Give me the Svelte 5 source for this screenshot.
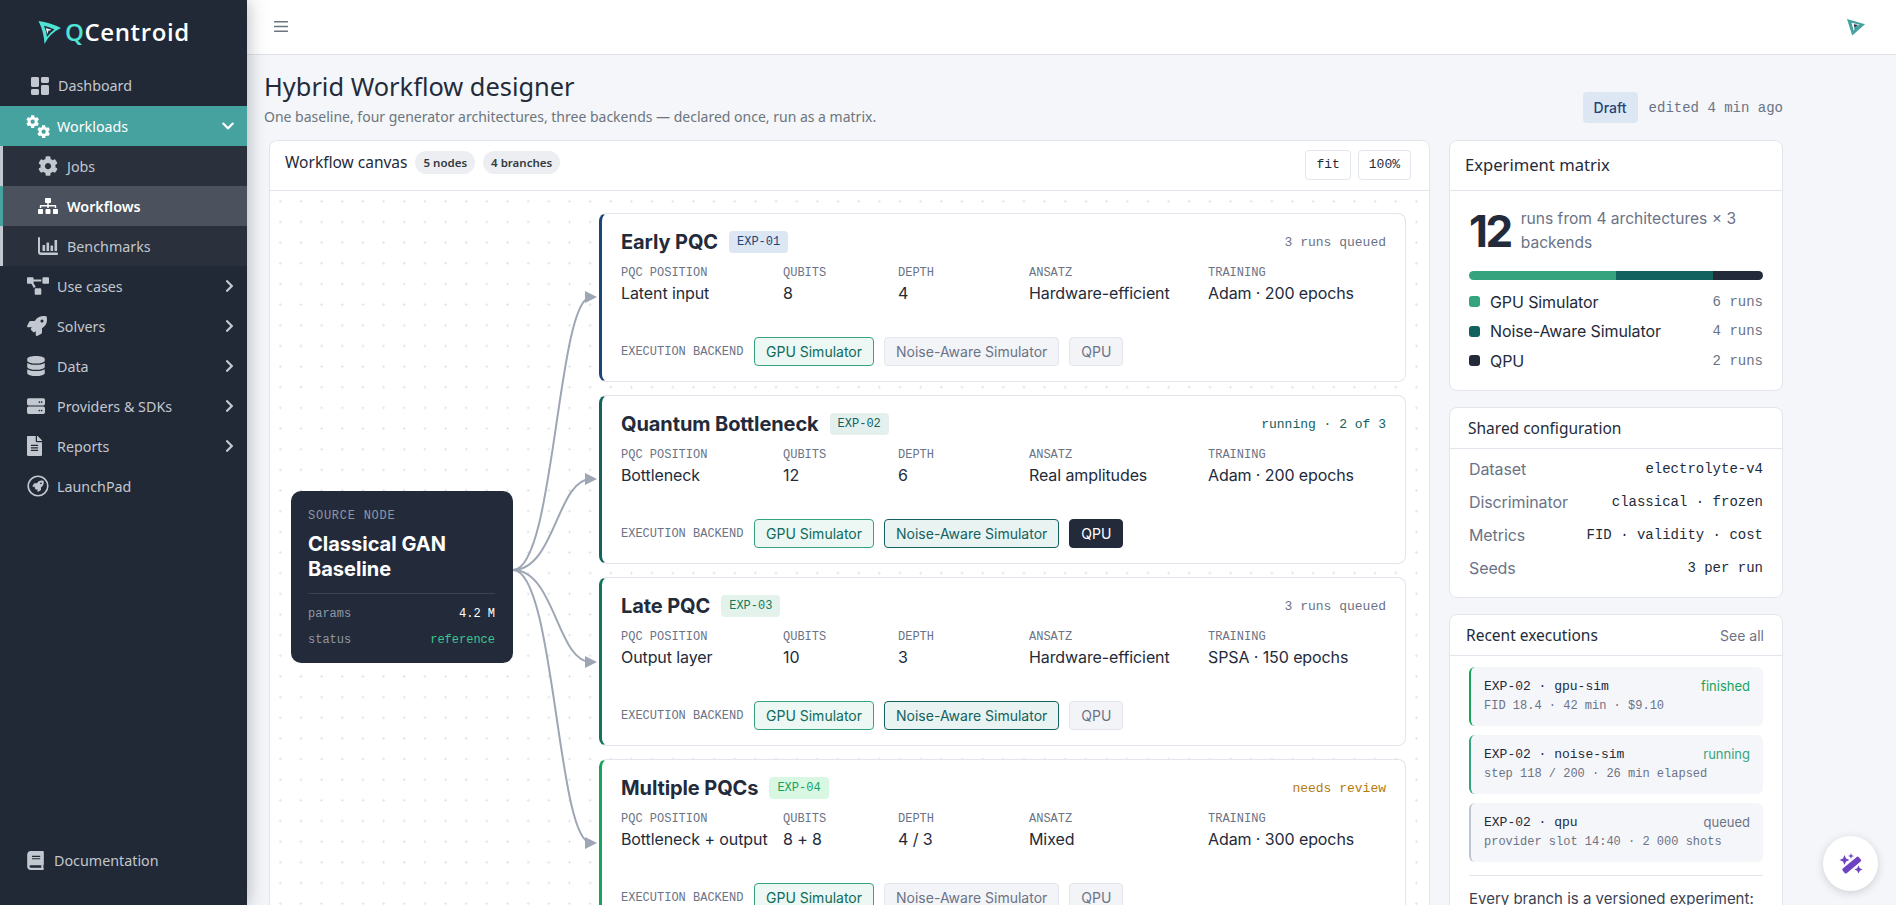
<script lang="ts">
  const COG = 'M487.4 315.7l-42.6-24.6c4.3-23.2 4.3-47 0-70.2l42.6-24.6c4.9-2.8 7.1-8.6 5.5-14-11.1-35.6-30-67.8-54.7-94.6-3.8-4.1-10-5.1-14.8-2.3L380.8 110c-17.9-15.4-38.5-27.3-60.8-35.1V25.8c0-5.6-3.9-10.5-9.4-11.7-36.7-8.2-74.3-7.8-109.2 0-5.5 1.2-9.4 6.1-9.4 11.7V75c-22.2 7.9-42.8 19.8-60.8 35.1L88.7 85.5c-4.9-2.8-11-1.9-14.8 2.3-24.7 26.7-43.6 58.9-54.7 94.6-1.7 5.4.6 11.2 5.5 14L67.3 221c-4.3 23.2-4.3 47 0 70.2l-42.6 24.6c-4.9 2.8-7.1 8.6-5.5 14 11.1 35.6 30 67.8 54.7 94.6 3.8 4.1 10 5.1 14.8 2.3l42.6-24.6c17.9 15.4 38.5 27.3 60.8 35.1v49.2c0 5.6 3.9 10.5 9.4 11.7 36.7 8.2 74.3 7.8 109.2 0 5.5-1.2 9.4-6.1 9.4-11.7v-49.2c22.2-7.9 42.8-19.8 60.8-35.1l42.6 24.6c4.9 2.8 11 1.9 14.8-2.3 24.7-26.7 43.6-58.9 54.7-94.6 1.5-5.5-.7-11.3-5.6-14.1zM256 336c-44.1 0-80-35.9-80-80s35.9-80 80-80 80 35.9 80 80-35.9 80-80 80z';
  const ROCKET = 'M505.12 19.09c-1.19-5.53-6.66-11-12.21-12.19C460.72 0 435.51 0 410.41 0 307.18 0 245.27 55.2 199.05 128H94.84c-16.35.02-35.56 11.88-42.89 26.48L2.52 253.3A28.4 28.4 0 0 0 0 264a24 24 0 0 0 24 24h103.81l-22.47 22.47c-11.37 11.36-13 32.26 0 45.25l50.91 50.91c11.16 11.19 32.16 13.16 45.28 0l22.47-22.47V488a24 24 0 0 0 24 24 28.56 28.56 0 0 0 10.71-2.52l98.73-49.39c14.63-7.3 26.51-26.5 26.51-42.86V312.8c72.6-46.31 128.03-108.41 128.03-211.09.01-25.2.01-50.41-6.95-82.62zM384.04 168a40 40 0 1 1 40.01-40 40.02 40.02 0 0 1-40.01 40z';

  const navAfter = [
    { label: 'Use cases', box: '0 0 640 512', w: 22, d: 'M384 320H256c-17.67 0-32 14.33-32 32v128c0 17.67 14.33 32 32 32h128c17.67 0 32-14.33 32-32V352c0-17.67-14.33-32-32-32zM192 32c0-17.67-14.33-32-32-32H32C14.33 0 0 14.33 0 32v128c0 17.67 14.33 32 32 32h95.72l73.16 128.04C211.98 300.98 232.4 288 256 288h.28L192 175.51V128h224V64H192V32zM608 0H480c-17.67 0-32 14.33-32 32v128c0 17.67 14.33 32 32 32h128c17.67 0 32-14.33 32-32V32c0-17.67-14.33-32-32-32z' },
    { label: 'Solvers', box: '0 0 512 512', w: 20, d: ROCKET },
    { label: 'Data', box: '0 0 448 512', w: 18, d: 'M448 73.143v45.714C448 159.143 347.667 192 224 192S0 159.143 0 118.857V73.143C0 32.857 100.333 0 224 0s224 32.857 224 73.143zM448 176v102.857C448 319.143 347.667 352 224 352S0 319.143 0 278.857V176c48.125 33.143 136.208 48.572 224 48.572S399.874 209.143 448 176zm0 160v102.857C448 479.143 347.667 512 224 512S0 479.143 0 438.857V336c48.125 33.143 136.208 48.572 224 48.572S399.874 369.143 448 336z' },
    { label: 'Providers & SDKs', box: '0 0 512 512', w: 18, d: 'M48 32h416a48 48 0 0 1 48 48v112a48 48 0 0 1-48 48H48a48 48 0 0 1-48-48V80a48 48 0 0 1 48-48zm304 88a24 24 0 1 0 0 48 24 24 0 0 0 0-48zm64 0a24 24 0 1 0 0 48 24 24 0 0 0 0-48zM48 272h416a48 48 0 0 1 48 48v112a48 48 0 0 1-48 48H48a48 48 0 0 1-48-48V320a48 48 0 0 1 48-48zm304 88a24 24 0 1 0 0 48 24 24 0 0 0 0-48zm64 0a24 24 0 1 0 0 48 24 24 0 0 0 0-48z' },
    { label: 'Reports', box: '0 0 384 512', w: 15, d: 'M224 136V0H24C10.7 0 0 10.7 0 24v464c0 13.3 10.7 24 24 24h336c13.3 0 24-10.7 24-24V160H248c-13.2 0-24-10.8-24-24zm64 236c0 6.6-5.4 12-12 12H108c-6.6 0-12-5.4-12-12v-8c0-6.6 5.4-12 12-12h168c6.6 0 12 5.4 12 12v8zm0-64c0 6.6-5.4 12-12 12H108c-6.6 0-12-5.4-12-12v-8c0-6.6 5.4-12 12-12h168c6.6 0 12 5.4 12 12v8zm0-72v8c0 6.6-5.4 12-12 12H108c-6.6 0-12-5.4-12-12v-8c0-6.6 5.4-12 12-12h168c6.6 0 12 5.4 12 12zm96-114.1v6.1H256V0h6.1c6.4 0 12.5 2.5 17 7l97.9 98c4.5 4.5 7 10.6 7 16.9z' }
  ];

  const chevronRight = 'M285.476 272.971L91.132 467.314c-9.373 9.373-24.569 9.373-33.941 0l-22.667-22.667c-9.357-9.357-9.375-24.522-.04-33.901L188.505 256 34.484 101.255c-9.335-9.379-9.317-24.544.04-33.901l22.667-22.667c9.373-9.373 24.569-9.373 33.941 0L285.475 239.03c9.373 9.372 9.373 24.568.001 33.941z';

  const fields = ['PQC position', 'Qubits', 'Depth', 'Ansatz', 'Training'];
  const experiments = [
    { name: 'Early PQC', id: 'EXP-01', tone: 'navy', status: '3 runs queued', statusTone: '', values: ['Latent input', '8', '4', 'Hardware-efficient', 'Adam · 200 epochs'], noise: false, qpu: false },
    { name: 'Quantum Bottleneck', id: 'EXP-02', tone: 'teal', status: 'running · 2 of 3', statusTone: 'teal', values: ['Bottleneck', '12', '6', 'Real amplitudes', 'Adam · 200 epochs'], noise: true, qpu: true },
    { name: 'Late PQC', id: 'EXP-03', tone: 'pine', status: '3 runs queued', statusTone: '', values: ['Output layer', '10', '3', 'Hardware-efficient', 'SPSA · 150 epochs'], noise: true, qpu: false },
    { name: 'Multiple PQCs', id: 'EXP-04', tone: 'green', status: 'needs review', statusTone: 'amber', values: ['Bottleneck + output', '8 + 8', '4 / 3', 'Mixed', 'Adam · 300 epochs'], noise: false, qpu: false }
  ];

  // connector end points, in the svg's own coordinates
  const branchEnds = [84, 266, 449, 630];

  const legend = [
    { label: 'GPU Simulator', runs: '6 runs', color: '#36a37f' },
    { label: 'Noise-Aware Simulator', runs: '4 runs', color: '#12625f' },
    { label: 'QPU', runs: '2 runs', color: '#232b3b' }
  ];
  const shared = [
    ['Dataset', 'electrolyte-v4'],
    ['Discriminator', 'classical · frozen'],
    ['Metrics', 'FID · validity · cost'],
    ['Seeds', '3 per run']
  ];
  const runs = [
    { title: 'EXP-02 · gpu-sim', meta: 'FID 18.4 · 42 min · $9.10', state: 'finished', tone: 'finished' },
    { title: 'EXP-02 · noise-sim', meta: 'step 118 / 200 · 26 min elapsed', state: 'running', tone: 'running' },
    { title: 'EXP-02 · qpu', meta: 'provider slot 14:40 · 2 000 shots', state: 'queued', tone: 'queued' }
  ];
</script>

<div class="app">
  <aside class="sidebar">
    <div class="brand">
      <svg class="brand-mark" viewBox="0 0 24 24" aria-hidden="true">
        <path fill="#4fe3d6" fill-rule="evenodd" d="M.5 0 Q12 1.5 23 7 Q12 12 6.5 23 Q6 11 .5 0 Z M6 4.8 Q8.6 11 9 16 Q12 11.5 16.5 8.4 Q11 6 6 4.8 Z" />
        <path fill="#e8eef0" d="M7.8 7 L13.5 8.8 L10.2 10.2 L9.4 13.2 Z" />
        <path fill="#6d7684" d="M10.4 9.2 L12.4 9.3 L10.6 10.1 L10.1 11.4 Z" />
      </svg>
      <span class="brand-text"><span class="q">Q</span>Centroid</span>
    </div>

    <nav class="nav">
      <a class="nav-item">
        <span class="ico dash">
          <svg width="18" height="18" viewBox="0 0 18 18"><rect x="0" y="0" width="8" height="10" rx="1.4" /><rect x="10" y="0" width="8" height="6" rx="1.4" /><rect x="0" y="12" width="8" height="6" rx="1.4" /><rect x="10" y="8" width="8" height="10" rx="1.4" /></svg>
        </span>
        <span class="dashboard-label">Dashboard</span>
      </a>

      <a class="nav-item open">
        <span class="ico">
          <svg width="24" height="24" viewBox="0 0 24 24">
            <path transform="translate(0 1) scale(.026)" d={COG} />
            <path transform="translate(11 11) scale(.026)" d={COG} />
          </svg>
        </span>
        <span class="label">Workloads</span>
        <svg class="chev down" viewBox="0 0 448 512"><path d="M207.029 381.476L12.686 187.132c-9.373-9.373-9.373-24.569 0-33.941l22.667-22.667c9.357-9.357 24.522-9.375 33.901-.04L224 284.505l154.745-154.021c9.379-9.335 24.544-9.317 33.901.04l22.667 22.667c9.373 9.373 9.373 24.569 0 33.941L240.971 381.476c-9.373 9.372-24.569 9.372-33.942 0z" /></svg>
      </a>
      <div class="subnav">
        <a class="sub-item">
          <span class="sub-ico"><svg width="20" height="20" viewBox="0 0 512 512"><path d={COG} /></svg></span>
          Jobs
        </a>
        <a class="sub-item active">
          <span class="sub-ico"><svg width="20" height="16" viewBox="0 0 640 512"><path d="M128 352H32c-17.67 0-32 14.33-32 32v96c0 17.67 14.33 32 32 32h96c17.67 0 32-14.33 32-32v-96c0-17.67-14.33-32-32-32zm-24-80h192v48h48v-48h192v48h48v-57.59c0-21.17-17.23-38.41-38.41-38.41H344v-64h40c17.67 0 32-14.33 32-32V32c0-17.67-14.33-32-32-32H256c-17.67 0-32 14.33-32 32v96c0 17.67 14.33 32 32 32h40v64H94.41C73.23 224 56 241.23 56 262.41V320h48v-48zm264 80h-96c-17.67 0-32 14.33-32 32v96c0 17.67 14.33 32 32 32h96c17.67 0 32-14.33 32-32v-96c0-17.67-14.33-32-32-32zm240 0h-96c-17.67 0-32 14.33-32 32v96c0 17.67 14.33 32 32 32h96c17.67 0 32-14.33 32-32v-96c0-17.67-14.33-32-32-32z" /></svg></span>
          Workflows
        </a>
        <a class="sub-item">
          <span class="sub-ico"><svg width="20" height="18" viewBox="0 0 20 18"><path d="M0 1a1 1 0 0 1 2 0v13.6a1 1 0 0 0 1 1h16a1.2 1.2 0 0 1 0 2.4H3a3 3 0 0 1-3-3z" /><rect x="4.5" y="8" width="2.6" height="6" rx=".6" /><rect x="8.5" y="5.5" width="2.6" height="8.5" rx=".6" /><rect x="12.5" y="8.5" width="2.6" height="5.5" rx=".6" /><rect x="16.5" y="3" width="2.6" height="11" rx=".6" /></svg></span>
          Benchmarks
        </a>
      </div>

      {#each navAfter as item}
        <a class="nav-item">
          <span class="ico">
            <svg width={item.w} height="20" viewBox={item.box}><path d={item.d} /></svg>
          </span>
          <span class="label">{item.label}</span>
          <svg class="chev" viewBox="0 0 320 512"><path d={chevronRight} /></svg>
        </a>
      {/each}

      <a class="nav-item">
        <span class="ico">
          <svg width="22" height="22" viewBox="0 0 22 22">
            <circle cx="11" cy="11" r="9.8" fill="none" stroke="currentColor" stroke-width="1.6" />
            <path transform="translate(5.5 5.5) scale(.022)" d={ROCKET} />
          </svg>
        </span>
        <span class="label">LaunchPad</span>
      </a>
    </nav>

    <a class="doc-link">
      <svg width="17" height="19" viewBox="0 0 448 512"><path d="M448 360V24c0-13.3-10.7-24-24-24H96C43 0 0 43 0 96v320c0 53 43 96 96 96h328c13.3 0 24-10.7 24-24v-16c0-7.5-3.5-14.3-8.9-18.7-4.2-15.4-4.2-59.3 0-74.7 5.4-4.3 8.9-11.1 8.9-18.6zM128 134c0-3.3 2.7-6 6-6h212c3.3 0 6 2.7 6 6v20c0 3.3-2.7 6-6 6H134c-3.3 0-6-2.7-6-6v-20zm0 64c0-3.3 2.7-6 6-6h212c3.3 0 6 2.7 6 6v20c0 3.3-2.7 6-6 6H134c-3.3 0-6-2.7-6-6v-20zm253.4 250H96c-17.7 0-32-14.3-32-32 0-17.6 14.4-32 32-32h285.4c-1.9 17.1-1.9 46.9 0 64z" /></svg>
      Documentation
    </a>
  </aside>

  <div class="main">
    <header class="topbar">
      <svg class="burger" viewBox="0 0 14 11"><rect width="14" height="1.6" rx=".4" /><rect y="4.7" width="14" height="1.6" rx=".4" /><rect y="9.4" width="14" height="1.6" rx=".4" /></svg>
      <svg class="top-mark" viewBox="0 0 24 24" aria-hidden="true">
        <path fill="#45a29e" d="M0 2 L24 9 L7 24 Z" />
        <path fill="#ffffff" d="M6 7 L9 18 L11 12 L17 9.5 Z" />
        <path fill="#232b3b" d="M9 9 L15 10 L11.5 11.5 L10.5 15 Z" />
      </svg>
    </header>

    <div class="page">
      <div class="page-head">
        <div>
          <h1>Hybrid Workflow designer</h1>
          <p>One baseline, four generator architectures, three backends — declared once, run as a matrix.</p>
        </div>
        <div class="head-meta">
          <span class="draft">Draft</span>
          <span class="edited">edited 4 min ago</span>
        </div>
      </div>

      <div class="columns">
        <section class="card canvas">
          <div class="card-head canvas-head">
            <span class="card-title">Workflow canvas</span>
            <span class="badge">5 nodes</span>
            <span class="badge">4 branches</span>
            <span class="tools">
              <button type="button">fit</button>
              <button type="button">100%</button>
            </span>
          </div>
          <div class="canvas-body">
            <div class="source">
              <div class="source-kicker">SOURCE NODE</div>
              <div class="source-title">Classical GAN Baseline</div>
              <div class="source-row"><span>params</span><span class="white">4.2 M</span></div>
              <div class="source-row"><span>status</span><span class="mint">reference</span></div>
            </div>

            <svg class="links" width="86" height="715" viewBox="0 0 86 715" aria-hidden="true">
              {#each branchEnds as y}
                <path d="M0 357 C 42 357, 44 {y}, 78 {y}" fill="none" stroke="#9ea6b5" stroke-width="2" />
                <path d="M72 {y - 6} L84 {y} L72 {y + 6} Z" fill="#9ea6b5" />
              {/each}
            </svg>

            <div class="branches">
              {#each experiments as exp}
                <article class="node {exp.tone}">
                  <div class="node-head">
                    <h3>{exp.name}</h3>
                    <span class="tag {exp.tone}">{exp.id}</span>
                    <span class="node-status {exp.statusTone}">{exp.status}</span>
                  </div>
                  <div class="fields">
                    {#each fields as field, i}
                      <div>
                        <div class="field-label">{field}</div>
                        <div class="field-value">{exp.values[i]}</div>
                      </div>
                    {/each}
                  </div>
                  <div class="backends">
                    <span class="backend-label">EXECUTION BACKEND</span>
                    <span class="chip gpu">GPU Simulator</span>
                    <span class="chip" class:noise={exp.noise}>Noise-Aware Simulator</span>
                    <span class="chip" class:qpu={exp.qpu}>QPU</span>
                  </div>
                </article>
              {/each}
            </div>
          </div>
        </section>

        <div class="rail">
          <section class="card matrix-card">
            <div class="card-head"><span class="card-title">Experiment matrix</span></div>
            <div class="matrix">
              <div class="total"><strong>12</strong><span>runs from 4 architectures × 3 backends</span></div>
              <div class="bar">
                <i style="width: 50%; background: #36a37f"></i>
                <i style="width: 33%; background: #12625f"></i>
                <i style="width: 17%; background: #232b3b"></i>
              </div>
              <ul class="legend">
                {#each legend as row}
                  <li>
                    <i style="background: {row.color}"></i>
                    <span class="legend-label">{row.label}</span>
                    <span class="legend-runs">{row.runs}</span>
                  </li>
                {/each}
              </ul>
            </div>
          </section>

          <section class="card">
            <div class="card-head shared-head"><span class="card-title">Shared configuration</span></div>
            <dl class="shared">
              {#each shared as [key, value]}
                <div><dt>{key}</dt><dd>{value}</dd></div>
              {/each}
            </dl>
          </section>

          <section class="card recent">
            <div class="card-head recent-head">
              <span class="card-title">Recent executions</span>
              <a class="see-all">See all</a>
            </div>
            <div class="recent-body">
              {#each runs as run}
                <div class="run {run.tone}">
                  <div class="run-top"><span class="run-title">{run.title}</span><span class="run-state">{run.state}</span></div>
                  <div class="run-meta">{run.meta}</div>
                </div>
              {/each}
              <hr />
              <p class="note">Every branch is a versioned experiment: rerun any cell of the matrix.</p>
            </div>
          </section>
        </div>
      </div>
    </div>
  </div>

  <button type="button" class="fab" aria-label="Assistant">
    <svg width="24" height="22" viewBox="0 0 24 22">
      <rect x="2" y="9.5" width="21" height="6" rx="1.4" transform="rotate(-40 12 12)" />
      <path d="M5.5 2 L7 5.5 L10.5 7 L7 8.5 L5.5 12 L4 8.5 L.5 7 L4 5.5 Z" />
      <path d="M12 0 L12.8 2.2 L15 3 L12.8 3.8 L12 6 L11.2 3.8 L9 3 L11.2 2.2 Z" />
      <path d="M19.5 12.5 L20.8 15.2 L23.5 16.5 L20.8 17.8 L19.5 20.5 L18.2 17.8 L15.5 16.5 L18.2 15.2 Z" />
    </svg>
  </button>
</div>

<style>
  :global(body) {
    margin: 0;
    background: #f4f6f9;
  }

  .app {
    display: flex;
    height: 905px;
    overflow: hidden;
    position: relative;
    font-family: 'Noto Sans', sans-serif;
    color: #232b3b;
  }

  /* sidebar */
  .sidebar {
    width: 247px;
    flex: none;
    display: flex;
    flex-direction: column;
    background: #212936;
    box-shadow: 0 0 18px rgba(33, 41, 54, 0.35);
    z-index: 2;
    color: #c2c7d0;
  }

  .brand {
    height: 66px;
    display: flex;
    align-items: center;
    padding-left: 38px;
    gap: 3px;
    box-sizing: border-box;
  }

  .brand-mark {
    width: 24px;
    height: 24px;
    margin-top: -1px;
  }

  .brand-text {
    font-family: 'Open Sans', sans-serif;
    font-size: 24px;
    font-weight: 600;
    letter-spacing: 0.6px;
    color: #fff;
    line-height: 1;
    margin-top: -2px;
  }

  .q {
    color: #4fe3d6;
  }

  .nav {
    flex: 1;
    padding-top: 0;
  }

  .nav-item {
    display: flex;
    align-items: center;
    height: 40px;
    font-size: 14.3px;
    color: #c2c7d0;
    fill: currentColor;
  }

  .ico {
    width: 57px;
    flex: none;
    display: flex;
    justify-content: flex-start;
    padding-left: 27px;
    box-sizing: border-box;
    align-items: center;
  }

  .ico.dash {
    padding-left: 31px;
    width: 58px;
  }

  .dashboard-label {
    line-height: 1;
  }

  .label {
    flex: 1;
  }

  .nav-item.open {
    background: #45a29e;
    color: #fff;
  }

  .nav-item.open .ico {
    padding-left: 26px;
  }

  .chev {
    width: 11px;
    height: 14px;
    margin-right: 12px;
    flex: none;
  }

  .chev.down {
    width: 14px;
    height: 14px;
    margin-right: 12px;
  }

  .subnav {
    background: #2a303c;
    margin-bottom: 0;
  }

  .sub-item {
    display: flex;
    align-items: center;
    height: 40px;
    font-size: 14.3px;
    border-left: 3px solid #c2c7d0;
    color: #c2c7d0;
    fill: currentColor;
    box-sizing: border-box;
  }

  .sub-ico {
    width: 64px;
    box-sizing: border-box;
    padding-left: 35px;
    display: flex;
    align-items: center;
  }

  .sub-item.active {
    background: #4b525d;
    border-left-color: #45a29e;
    color: #fff;
    font-weight: 600;
  }

  .doc-link {
    display: flex;
    align-items: center;
    gap: 10px;
    padding: 0 0 35px 27px;
    font-size: 14.3px;
    fill: currentColor;
  }

  /* main column */
  .main {
    flex: 1;
    min-width: 0;
    display: flex;
    flex-direction: column;
  }

  .topbar {
    height: 55px;
    flex: none;
    box-sizing: border-box;
    background: #fff;
    border-bottom: 1px solid #dee2e6;
    display: flex;
    align-items: center;
    justify-content: space-between;
    padding: 0 31px 0 27px;
  }

  .burger {
    width: 14px;
    height: 11px;
    fill: #6c757d;
    margin-bottom: 1px;
  }

  .top-mark {
    width: 18px;
    height: 19px;
    margin-bottom: 2px;
  }

  .page {
    padding: 15px 113px 0 17px;
    width: 1649px;
    box-sizing: border-box;
  }

  .page-head {
    display: flex;
    align-items: flex-start;
    justify-content: space-between;
    height: 70px;
  }

  h1 {
    margin: 0;
    font-size: 25.4px;
    font-weight: 400;
    line-height: 32px;
    color: #232b3b;
  }

  .page-head p {
    margin: 5px 0 0;
    font-size: 14px;
    line-height: 19px;
    color: #6c757d;
  }

  .head-meta {
    display: flex;
    align-items: center;
    gap: 11px;
    margin-top: 22px;
  }

  .draft {
    background: #dde7f4;
    color: #1d4477;
    font-family: Inter, sans-serif;
    font-weight: 500;
    font-size: 14px;
    height: 31px;
    line-height: 31px;
    padding: 0 11px;
    border-radius: 4px;
  }

  .edited {
    font-family: 'Liberation Mono', monospace;
    font-size: 14px;
    color: #6b7386;
  }

  .columns {
    display: flex;
    align-items: flex-start;
    gap: 19px;
    padding-left: 5px;
    margin-top: 0;
  }

  .card {
    background: #fff;
    border: 1px solid #e2e5eb;
    border-radius: 8px;
    box-sizing: border-box;
  }

  .card-head {
    height: 50px;
    box-sizing: border-box;
    border-bottom: 1px solid #e2e5eb;
    display: flex;
    align-items: center;
    padding: 0 15px 2px;
  }

  .card-title {
    font-size: 15.5px;
    color: #232b3b;
  }

  .matrix-card .card-title {
    font-size: 16.6px;
  }

  .canvas {
    width: 1161px;
    flex: none;
    height: 900px;
  }

  .canvas-head {
    gap: 8px;
    padding-bottom: 7px;
  }

  .badge {
    font-family: 'Noto Sans', sans-serif;
    font-size: 11.5px;
    font-weight: 600;
    color: #343a40;
    background: #eceef1;
    border-radius: 12px;
    height: 23px;
    line-height: 23px;
    padding: 0 8px;
  }

  .tools {
    margin-left: auto;
    display: flex;
    gap: 7px;
    margin-right: 3px;
    margin-top: 5px;
  }

  .tools button {
    height: 30px;
    padding: 0 10px;
    font-family: 'Liberation Mono', monospace;
    font-size: 13px;
    color: #232b3b;
    background: #fff;
    border: 1px solid #e2e5eb;
    border-radius: 4px;
  }

  .canvas-body {
    display: flex;
    align-items: center;
    padding: 22px 22px 0 21px;
    background-image: radial-gradient(circle, #e3e6eb 1px, transparent 1.2px);
    background-size: 20.67px 20.67px;
    background-position: 0 0;
    height: 850px;
    box-sizing: border-box;
    overflow: hidden;
  }

  .source {
    width: 222px;
    flex: none;
    box-sizing: border-box;
    background: #232b3b;
    border-radius: 10px;
    padding: 17px 18px 10px 17px;
    height: 172px;
    color: #8f97a5;
    font-family: 'Liberation Mono', monospace;
    font-size: 12px;
    align-self: flex-start;
    margin-top: 278px;
  }

  .source-kicker {
    letter-spacing: 0.75px;
    line-height: 16px;
  }

  .source-title {
    font-family: Inter, sans-serif;
    font-weight: 700;
    font-size: 20px;
    line-height: 25px;
    color: #fff;
    margin-top: 8px;
    padding-bottom: 11px;
    border-bottom: 1px solid #3a4252;
    margin-bottom: 12px;
  }

  .source-row {
    display: flex;
    justify-content: space-between;
    line-height: 16px;
    margin-bottom: 10px;
  }

  .white {
    color: #fff;
  }

  .mint {
    color: #3fc48c;
  }

  .links {
    flex: none;
    align-self: flex-start;
  }

  .branches {
    width: 807px;
    flex: none;
    align-self: flex-start;
    display: flex;
    flex-direction: column;
    gap: 13px;
    margin-left: 0;
  }

  .node {
    height: 169px;
    box-sizing: border-box;
    background: #fff;
    border: 1px solid #e2e5eb;
    border-left-width: 3px;
    border-radius: 8px;
    padding: 16px 19px 15px 19px;
    display: flex;
    flex-direction: column;
  }

  .node.navy {
    border-left-color: #1d4477;
  }

  .node.teal {
    border-left-color: #12625f;
  }

  .node.pine {
    border-left-color: #12745a;
  }

  .node.green {
    border-left-color: #16a35c;
  }

  .node-head {
    display: flex;
    align-items: center;
    height: 24px;
    gap: 11px;
  }

  h3 {
    margin: 0;
    font-family: Inter, sans-serif;
    font-size: 20px;
    font-weight: 700;
    letter-spacing: -0.1px;
    color: #232b3b;
  }

  .tag {
    font-family: 'Liberation Mono', monospace;
    font-size: 12px;
    height: 22px;
    line-height: 22px;
    padding: 0 8px;
    border-radius: 4px;
  }

  .tag.navy {
    background: #dde7f4;
    color: #1d4477;
  }

  .tag.teal {
    background: #e3f0ee;
    color: #12625f;
  }

  .tag.pine {
    background: #e4f2ec;
    color: #127a5a;
  }

  .tag.green {
    background: #d9f8e4;
    color: #16a35c;
  }

  .node-status {
    margin-left: auto;
    font-family: 'Liberation Mono', monospace;
    font-size: 13px;
    color: #6b7386;
  }

  .node-status.teal {
    color: #12625f;
  }

  .node-status.amber {
    color: #b57a0a;
  }

  .fields {
    display: grid;
    grid-template-columns: 162px 115px 131px 179px 1fr;
    margin-top: 11px;
  }

  .field-label {
    font-family: 'Liberation Mono', monospace;
    font-size: 12px;
    line-height: 16px;
    text-transform: uppercase;
    color: #6b7386;
  }

  .field-value {
    font-family: Inter, sans-serif;
    font-size: 16px;
    line-height: 22px;
    margin-top: 1px;
    color: #232b3b;
    white-space: nowrap;
    letter-spacing: -0.1px;
  }

  .backends {
    margin-top: auto;
    display: flex;
    align-items: center;
    gap: 10px;
  }

  .backend-label {
    width: 123px;
    font-family: 'Liberation Mono', monospace;
    font-size: 12px;
    color: #6b7386;
    white-space: nowrap;
  }

  .chip {
    font-family: Inter, sans-serif;
    font-size: 14px;
    height: 29px;
    line-height: 27px;
    box-sizing: border-box;
    padding: 0 11px;
    border: 1px solid #e2e5eb;
    border-radius: 4px;
    background: #f3f4f8;
    color: #6b7386;
  }

  .chip.gpu {
    background: #edf7f3;
    border-color: #36a37f;
    color: #0f6b5a;
  }

  .chip.noise {
    background: #e9f3f2;
    border-color: #12625f;
    color: #12625f;
  }

  .chip.qpu {
    background: #232b3b;
    border-color: #232b3b;
    color: #fff;
  }

  /* right rail */
  .rail {
    width: 334px;
    flex: none;
    display: flex;
    flex-direction: column;
    gap: 16px;
  }

  .matrix {
    padding: 16px 19px 0 19px;
    height: 199px;
    box-sizing: border-box;
  }

  .total {
    display: flex;
    align-items: center;
    gap: 10px;
  }

  .total strong {
    font-family: Inter, sans-serif;
    font-size: 44px;
    font-weight: 700;
    letter-spacing: -2.5px;
    line-height: 44px;
    color: #232b3b;
  }

  .total span {
    font-family: Inter, sans-serif;
    font-size: 15.6px;
    line-height: 24px;
    color: #6b7386;
  }

  .bar {
    display: flex;
    height: 9px;
    border-radius: 5px;
    overflow: hidden;
    margin-top: 16px;
  }

  .bar i {
    display: block;
  }

  .legend {
    list-style: none;
    margin: 7px 0 0;
    padding: 0;
  }

  .legend li {
    display: flex;
    align-items: center;
    height: 29.5px;
  }

  .legend i {
    width: 11px;
    height: 11px;
    border-radius: 3px;
    margin-right: 10px;
  }

  .legend-label {
    font-family: Inter, sans-serif;
    font-size: 16px;
    letter-spacing: -0.1px;
    flex: 1;
  }

  .legend-runs {
    font-family: 'Liberation Mono', monospace;
    font-size: 14px;
    color: #6b7386;
  }

  .shared-head,
  .recent-head {
    height: 41px;
    padding: 0 18px;
  }

  .shared {
    margin: 0;
    padding: 3px 19px 0;
    height: 148px;
    box-sizing: border-box;
  }

  .shared div {
    display: flex;
    justify-content: space-between;
    align-items: center;
    height: 33px;
  }

  .shared dt {
    font-family: Inter, sans-serif;
    font-size: 16px;
    letter-spacing: -0.1px;
    color: #6b7386;
  }

  .shared dd {
    margin: 0;
    font-family: 'Liberation Mono', monospace;
    font-size: 14px;
    color: #232b3b;
  }

  .recent-head {
    justify-content: space-between;
    padding: 0 18px 0 16px;
  }

  .see-all {
    font-family: Inter, sans-serif;
    font-size: 14px;
    color: #6b7386;
  }

  .recent-body {
    padding: 11px 19px;
  }

  .run {
    height: 59px;
    box-sizing: border-box;
    background: #f5f6f9;
    border-left: 2.5px solid #c0c5d2;
    border-radius: 6px;
    padding: 9px 13px 0 13px;
    margin-bottom: 9px;
  }

  .run.finished {
    border-left-color: #16a35c;
  }

  .run.running {
    border-left-color: #36a37f;
  }

  .run-top {
    display: flex;
    justify-content: space-between;
    align-items: center;
    height: 20px;
  }

  .run-title {
    font-family: 'Liberation Mono', monospace;
    font-size: 13px;
    color: #232b3b;
  }

  .run-state {
    font-family: Inter, sans-serif;
    font-size: 13px;
    color: #6b7386;
  }

  .finished .run-state {
    color: #16a35c;
  }

  .running .run-state {
    color: #36a37f;
  }

  .run-meta {
    font-family: 'Liberation Mono', monospace;
    font-size: 12px;
    line-height: 20px;
    color: #6b7386;
  }

  hr {
    border: 0;
    border-top: 1px solid #e2e5eb;
    margin: 13px 0 12px;
  }

  .note {
    margin: 0;
    font-family: Inter, sans-serif;
    font-size: 15px;
    line-height: 22px;
    color: #3b4252;
  }

  .fab {
    position: absolute;
    left: 1823px;
    top: 836px;
    width: 55px;
    height: 55px;
    border: 0;
    padding: 0;
    border-radius: 50%;
    background: #fff;
    box-shadow: 0 2px 8px rgba(33, 41, 54, 0.18);
    display: flex;
    align-items: center;
    justify-content: center;
    fill: #6f42c1;
    z-index: 3;
  }
</style>
